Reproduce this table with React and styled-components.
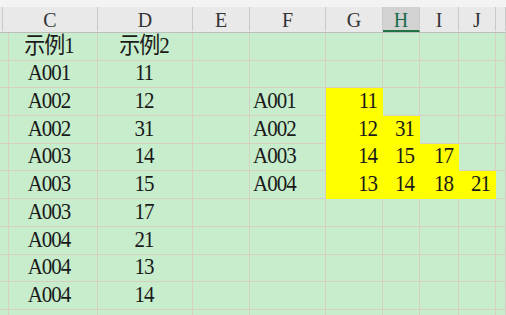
import React from 'react';
import styled, { createGlobalStyle } from 'styled-components';

const GlobalStyle = createGlobalStyle`
  html, body {
    margin: 0;
    padding: 0;
    background: #c7edcc;
    overflow: hidden;
  }
`;

const columns = ['', 'C', 'D', 'E', 'F', 'G', 'H', 'I', 'J', ''];
const activeColumn = 'H';

// each row: [C, D, E, F, ...values in G..J]
const rows = [
  ['示例1', '示例2', '', ''],
  ['A001', '11', '', ''],
  ['A002', '12', '', 'A001', 11],
  ['A002', '31', '', 'A002', 12, 31],
  ['A003', '14', '', 'A003', 14, 15, 17],
  ['A003', '15', '', 'A004', 13, 14, 18, 21],
  ['A003', '17', '', ''],
  ['A004', '21', '', ''],
  ['A004', '13', '', ''],
  ['A004', '14', '', ''],
  ['', '', '', ''],
];

const Sheet = styled.div`
  display: grid;
  grid-template-columns: 3px 95px 95px 57px 76px 57px 37px 39px 37px 1fr;
  grid-template-rows: 33px repeat(11, 27.7px);
  width: 506px;
  height: 315px;
  overflow: hidden;
  background: #c7edcc;
  font-family: "Liberation Serif", "Noto Sans CJK SC", serif;
  color: #1a1a1a;
`;

const HeaderCell = styled.div`
  display: flex;
  padding-top: 7px;
  background: #f3f3f3;
  border-bottom: 1px solid #bdbdbd;
`;

const HeaderLabel = styled.div`
  flex: 1;
  display: flex;
  align-items: center;
  justify-content: center;
  background: ${(p) => (p.$active ? '#d2d2d2' : '#e9e9e9')};
  border-right: 1px solid #c9c9c9;
  border-bottom: 2px solid ${(p) => (p.$active ? '#217346' : 'transparent')};
  color: ${(p) => (p.$active ? '#1d6b4c' : '#333')};
  font-size: 20px;
  padding-top: 2px;
  span {
    display: inline-block;
    transform: scaleY(1.1);
  }
`;

const Cell = styled.div`
  display: flex;
  align-items: flex-end;
  justify-content: ${(p) => p.$align};
  padding: 0 5px 3px 3px;
  box-sizing: border-box;
  background: ${(p) => (p.$fill ? '#ffff00' : 'transparent')};
  border-right: 1px solid ${(p) => (p.$fill ? '#ffff00' : '#d6cfc2')};
  border-bottom: 1px solid ${(p) => (p.$fill ? '#ffff00' : '#d6cfc2')};
  font-size: 21px;
  letter-spacing: -1px;
  line-height: 1;
  white-space: nowrap;
`;

const Text = styled.span`
  display: inline-block;
  transform: scaleY(1.1);
  transform-origin: bottom;
`;

const alignFor = (i) => {
  if (i === 1 || i === 2) return 'center';
  if (i >= 5 && i <= 8) return 'flex-end';
  return 'flex-start';
};

export default function App() {
  return (
    <>
      <GlobalStyle />
      <Sheet>
        {columns.map((c, i) => (
          <HeaderCell key={'h' + i}>
            <HeaderLabel $active={c === activeColumn}>
              <span>{c}</span>
            </HeaderLabel>
          </HeaderCell>
        ))}
        {rows.map((row, r) =>
          columns.map((_, i) => {
            const value = i >= 1 && i <= 8 ? row[i - 1] : undefined;
            const fill = i >= 5 && value !== undefined && value !== '';
            return (
              <Cell key={r + '-' + i} $align={alignFor(i)} $fill={fill}>
                {value !== undefined && value !== '' && <Text>{value}</Text>}
              </Cell>
            );
          })
        )}
      </Sheet>
    </>
  );
}
